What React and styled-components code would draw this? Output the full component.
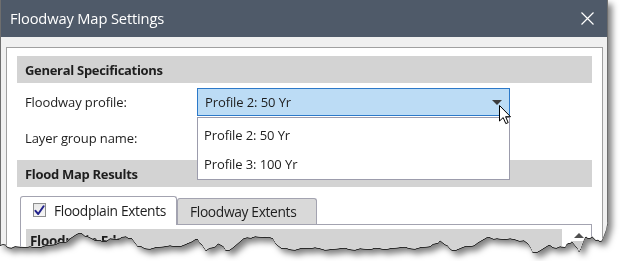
import styled, { createGlobalStyle } from "styled-components";

const GlobalStyle = createGlobalStyle`
  html, body {
    margin: 0;
    padding: 0;
    background: #ffffff;
  }
  body {
    font-family: "Open Sans", "Noto Sans", "Liberation Sans", sans-serif;
    color: #1e1e1e;
  }
`;

// torn bottom edge, right to left
const tearPoints = [
  [608, 222], [606, 230], [603, 238], [600, 241], [596, 240], [592, 236], [588, 238],
  [585, 237], [582, 244], [579, 251], [576, 246], [572, 241], [568, 243], [565, 247],
  [560, 246], [553, 247], [548, 245], [540, 250], [533, 252], [528, 243], [524, 240],
  [515, 239], [505, 239], [497, 238], [490, 237], [485, 238], [478, 242], [470, 246],
  [462, 247], [455, 250], [450, 248], [445, 244], [440, 240], [436, 243], [430, 246],
  [420, 247], [410, 248], [400, 247], [390, 248], [380, 248], [370, 249], [360, 248],
  [350, 249], [340, 248], [330, 249], [320, 248], [310, 248], [300, 248], [290, 249],
  [282, 248], [278, 245], [273, 238], [265, 237], [255, 236], [247, 237], [240, 241],
  [233, 247], [226, 250], [222, 245], [218, 243], [213, 247], [206, 250], [202, 244],
  [198, 239], [192, 241], [185, 244], [175, 246], [165, 246], [155, 247], [145, 248],
  [138, 246], [132, 238], [126, 236], [118, 239], [110, 238], [103, 241], [96, 240],
  [88, 236], [82, 233], [76, 234], [70, 238], [64, 242], [55, 244], [45, 245],
  [35, 247], [25, 247], [15, 246], [8, 247], [3, 244], [0, 245],
];

const buildClip = () => {
  const pts = [[0, 0], [608, 0]];
  tearPoints.forEach(([x, y], i) => {
    pts.push([x, y]);
    const next = tearPoints[i + 1];
    if (next) {
      const j = ((i * 7) % 3) - 1;
      pts.push([(x + next[0]) / 2, (y + next[1]) / 2 + j]);
    }
  });
  return `polygon(${pts.map(([x, y]) => `${x}px ${y}px`).join(", ")})`;
};

const Stage = styled.div`
  width: 624px;
  height: 261px;
  overflow: hidden;
`;

const ShadowWrap = styled.div`
  width: 608px;
  filter: drop-shadow(0 1px 0 #2a2a2a) drop-shadow(4px 4px 3px rgba(0, 0, 0, 0.5));
`;

const Window = styled.div`
  width: 608px;
  height: 256px;
  box-sizing: border-box;
  background: #f0f0f0;
  border-left: 1px solid #6e6e6e;
  border-right: 1px solid #6e6e6e;
  display: flex;
  flex-direction: column;
  clip-path: ${buildClip()};
`;

const TitleBar = styled.div`
  height: 37px;
  flex: none;
  background: #4f5a69;
  display: flex;
  align-items: center;
  justify-content: space-between;
  padding: 0 13px 0 9px;
`;

const Title = styled.span`
  color: #ffffff;
  font-size: 14.7px;
  letter-spacing: -0.15px;
  margin-top: -2px;
`;

const Body = styled.div`
  flex: 1;
  padding: 10px 4px 0 5px;
  display: flex;
`;

const Panel = styled.div`
  flex: 1;
  background: #ffffff;
  border: 1px solid #a0a0a0;
  border-bottom: none;
  padding: 8px 10px 0 10px;
`;

const SectionBar = styled.div`
  height: 27px;
  background: #d3d3d3;
  display: flex;
  align-items: center;
  padding-left: 8px;
  font-size: 13px;
  font-weight: 700;
  letter-spacing: -0.3px;
  margin-top: ${(p) => p.$top || 0}px;
`;

const FieldRow = styled.div`
  height: 28px;
  display: flex;
  align-items: center;
  margin-top: ${(p) => p.$top}px;
  position: relative;
`;

const Label = styled.span`
  width: 172px;
  padding-left: 8px;
  font-size: 13px;
  letter-spacing: -0.1px;
`;

const Combo = styled.div`
  position: relative;
  width: 313px;
  height: 28px;
  box-sizing: border-box;
  background: #bcdcf5;
  border: 1px solid #2c79c9;
  display: flex;
  align-items: center;
  padding-left: 7px;
  font-size: 13px;
  letter-spacing: -0.1px;
`;

const Arrow = styled.span`
  position: absolute;
  right: 7px;
  top: 11px;
  width: 0;
  height: 0;
  border-left: 5px solid transparent;
  border-right: 5px solid transparent;
  border-top: 5px solid #3c3c3c;
`;

const Cursor = styled.svg`
  position: absolute;
  left: 482px;
  top: 17px;
  z-index: 3;
`;

const DropList = styled.div`
  position: absolute;
  left: 180px;
  top: 29px;
  width: 313px;
  height: 63px;
  box-sizing: border-box;
  background: #ffffff;
  border: 1px solid #9c9cac;
  z-index: 2;
  display: flex;
  flex-direction: column;
  padding-top: 2px;
`;

const DropItem = styled.div`
  height: 30px;
  display: flex;
  align-items: center;
  padding-left: 6px;
  font-size: 13px;
  letter-spacing: -0.1px;
`;

const TabRow = styled.div`
  display: flex;
  align-items: flex-end;
  margin: 9px 0 0 3px;
  position: relative;
  z-index: 1;
`;

const Tab = styled.div`
  box-sizing: border-box;
  width: ${(p) => p.$w}px;
  height: ${(p) => (p.$active ? 29 : 26)}px;
  margin-bottom: ${(p) => (p.$active ? -1 : 0)}px;
  background: ${(p) => (p.$active ? "#ffffff" : "#d9d9d9")};
  border: 1px solid #a3a3b0;
  border-bottom: none;
  border-radius: 3px 3px 0 0;
  display: flex;
  align-items: center;
  gap: 8px;
  padding: ${(p) => (p.$active ? "0 0 2px 12px" : "0 0 0 12px")};
  font-size: 13.8px;
  letter-spacing: -0.35px;
  white-space: nowrap;
`;

const CheckBox = styled.span`
  width: 13px;
  height: 14px;
  flex: none;
  box-sizing: border-box;
  border: 1px solid #8e8f8f;
  background: linear-gradient(#e8e8e8, #f6f6f6);
  display: flex;
  align-items: center;
  justify-content: center;
`;

const TabPanel = styled.div`
  margin-left: 3px;
  border-top: 1px solid #a3a3b0;
  border-left: 1px solid #a3a3b0;
  border-right: 1px solid #a3a3b0;
  height: 40px;
  display: flex;
  padding: 4px 2px 0 5px;
  gap: 8px;
`;

const InnerBar = styled.div`
  width: 536px;
  height: 30px;
  background: #d3d3d3;
  font-size: 13.5px;
  font-weight: 700;
  padding: 3px 0 0 4px;
  box-sizing: border-box;
  letter-spacing: -0.3px;
`;

const ScrollBar = styled.div`
  width: 18px;
  display: flex;
  flex-direction: column;
`;

const ScrollUp = styled.div`
  height: 12px;
  display: flex;
  align-items: center;
  justify-content: center;
  &::after {
    content: "";
    border-left: 5px solid transparent;
    border-right: 5px solid transparent;
    border-bottom: 5px solid #505050;
  }
`;

const ScrollThumb = styled.div`
  flex: 1;
  margin: 0 3px;
  background: #cdcdcd;
`;

export default function App() {
  return (
    <>
      <GlobalStyle />
      <Stage>
        <ShadowWrap>
          <Window>
            <TitleBar>
              <Title>Floodway Map Settings</Title>
              <svg width="13" height="13" viewBox="0 0 13 13">
                <path d="M0.5 0.5 L12.5 12.5 M12.5 0.5 L0.5 12.5" stroke="#ffffff" strokeWidth="1.2" fill="none" />
              </svg>
            </TitleBar>
            <Body>
              <Panel>
                <SectionBar>General Specifications</SectionBar>
                <FieldRow $top={5}>
                  <Label>Floodway profile:</Label>
                  <Combo>
                    Profile 2: 50 Yr
                    <Arrow />
                  </Combo>
                  <Cursor width="13" height="20" viewBox="0 0 13 20">
                    <path d="M0.5 0.5 L0.5 16 L4.2 12.6 L6.8 18.6 L9.2 17.6 L6.6 11.7 L11.5 11.7 Z" fill="#ffffff" stroke="#000000" strokeWidth="1" strokeLinejoin="round" />
                  </Cursor>
                  <DropList>
                    <DropItem>Profile 2: 50 Yr</DropItem>
                    <DropItem>Profile 3: 100 Yr</DropItem>
                  </DropList>
                </FieldRow>
                <FieldRow $top={8}>
                  <Label>Layer group name:</Label>
                </FieldRow>
                <SectionBar $top={8}>Flood Map Results</SectionBar>
                <TabRow>
                  <Tab $active $w={157}>
                    <CheckBox>
                      <svg width="11" height="11" viewBox="0 0 11 11">
                        <path d="M1.5 5.8 L4.2 9 L9.6 1.2" stroke="#23248c" strokeWidth="2" fill="none" strokeLinecap="round" strokeLinejoin="round" />
                      </svg>
                    </CheckBox>
                    Floodplain Extents
                  </Tab>
                  <Tab $w={140}>Floodway Extents</Tab>
                </TabRow>
                <TabPanel>
                  <InnerBar>Floodplain Edge</InnerBar>
                  <ScrollBar>
                    <ScrollUp />
                    <ScrollThumb />
                  </ScrollBar>
                </TabPanel>
              </Panel>
            </Body>
          </Window>
        </ShadowWrap>
      </Stage>
    </>
  );
}
